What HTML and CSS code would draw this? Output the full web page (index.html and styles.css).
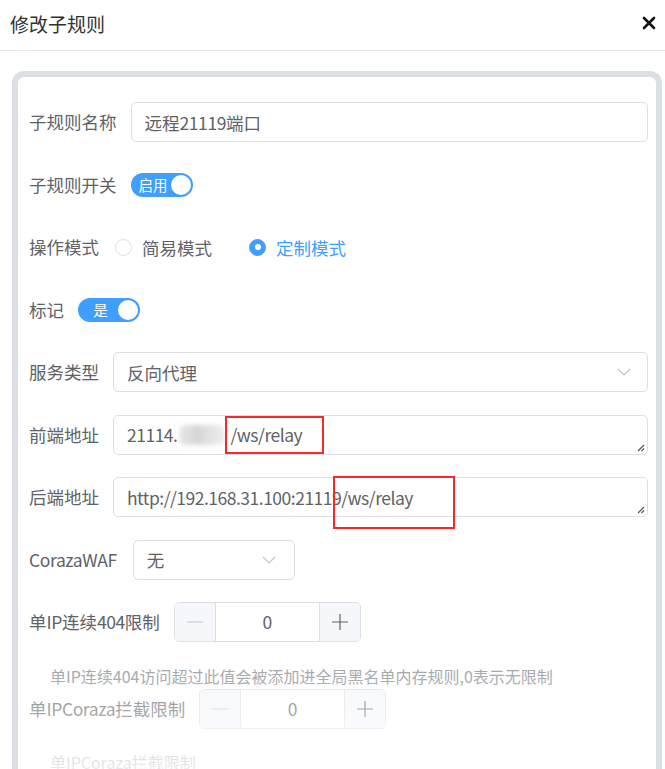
FILE: index.html
```html
<!DOCTYPE html>
<html lang="zh-CN">
<head>
<meta charset="utf-8">
<title>修改子规则</title>
<link rel="stylesheet" href="styles.css">
</head>
<body>
<div class="header">
  <div class="title">修改子规则</div>
  <svg class="close" width="14" height="14" viewBox="0 0 14 14"><path d="M2 2 L12 12 M12 2 L2 12" stroke="#111" stroke-width="2.6" stroke-linecap="round"/></svg>
</div>
<div class="content">
  <div class="card">
    <div class="row">
      <div class="label">子规则名称</div>
      <div class="input grow">远程<span class="lat">21119</span>端口</div>
    </div>
    <div class="row">
      <div class="label">子规则开关</div>
      <div class="switch"><span class="sw-text">启用</span><span class="knob"></span></div>
    </div>
    <div class="row">
      <div class="label">操作模式</div>
      <div class="radio"><span class="dot"></span><span class="rtext">简易模式</span></div>
      <div class="radio checked"><span class="dot"></span><span class="rtext">定制模式</span></div>
    </div>
    <div class="row">
      <div class="label">标记</div>
      <div class="switch"><span class="sw-text">是</span><span class="knob"></span></div>
    </div>
    <div class="row">
      <div class="label">服务类型</div>
      <div class="input select grow"><span>反向代理</span>
        <svg class="chev" width="14" height="8" viewBox="0 0 14 8"><path d="M1 1 L7 7 L13 1" fill="none" stroke="#c0c4cc" stroke-width="1.2"/></svg>
      </div>
    </div>
    <div class="row">
      <div class="label">前端地址</div>
      <div class="input textarea grow"><span class="lat">21114.</span><span class="blur"></span><span class="lat">/ws/relay</span>
        <svg class="grip" width="8" height="8" viewBox="0 0 8 8"><path d="M7 1 L1 7 M7 4.5 L4.5 7" stroke="#555" stroke-width="1.2"/></svg>
      </div>
    </div>
    <div class="row">
      <div class="label">后端地址</div>
      <div class="input textarea grow"><span class="lat">http://192.168.31.100:21119/ws/relay</span>
        <svg class="grip" width="8" height="8" viewBox="0 0 8 8"><path d="M7 1 L1 7 M7 4.5 L4.5 7" stroke="#555" stroke-width="1.2"/></svg>
      </div>
    </div>
    <div class="row">
      <div class="label"><span class="lat">CorazaWAF</span></div>
      <div class="input select waf"><span>无</span>
        <svg class="chev" width="14" height="8" viewBox="0 0 14 8"><path d="M1 1 L7 7 L13 1" fill="none" stroke="#c0c4cc" stroke-width="1.2"/></svg>
      </div>
    </div>
    <div class="row">
      <div class="label">单<span class="lat">IP</span>连续<span class="lat">404</span>限制</div>
      <div class="number">
        <span class="nbtn minus"><svg width="16" height="2" viewBox="0 0 16 2"><path d="M0 1 H16" stroke="#c0c4cc" stroke-width="1.2"/></svg></span>
        <span class="nval">0</span>
        <span class="nbtn plus"><svg width="16" height="16" viewBox="0 0 16 16"><path d="M0 8 H16 M8 0 V16" stroke="#606266" stroke-width="1.2"/></svg></span>
      </div>
    </div>
    <div class="help help1">单IP连续404访问超过此值会被添加进全局黑名单内存规则,0表示无限制</div>
    <div class="row row10">
      <div class="label">单<span class="lat">IPCoraza</span>拦截限制</div>
      <div class="number">
        <span class="nbtn minus"><svg width="16" height="2" viewBox="0 0 16 2"><path d="M0 1 H16" stroke="#c0c4cc" stroke-width="1.2"/></svg></span>
        <span class="nval">0</span>
        <span class="nbtn plus"><svg width="16" height="16" viewBox="0 0 16 16"><path d="M0 8 H16 M8 0 V16" stroke="#606266" stroke-width="1.2"/></svg></span>
      </div>
    </div>
    <div class="help help2">单IPCoraza拦截限制</div>
  </div>
</div>
<div class="fade"></div>
<div class="mark mark1"></div>
<div class="mark mark2"></div>
</body>
</html>
```
FILE: styles.css
```css
html, body {
  margin: 0;
  padding: 0;
  overflow: hidden;
  background: #fff;
  height: 769px;
}
body {
  font-family: "Noto Sans CJK SC", "Noto Sans", sans-serif;
  color: #606266;
}
.header {
  border-bottom: 1px solid #e4e7ed;
  display: flex;
  align-items: center;
  justify-content: space-between;
  padding: 0 9px 0 10px;
  box-sizing: border-box;
  height: 51px;
}
.title {
  font-size: 19px;
  color: #303133;
  margin-top: -4px;
}
.close {
  margin-top: -4px;
}
.content {
  padding: 20px 0 0 12px;
}
.card {
  width: 650px;
  box-sizing: border-box;
  border: 6px solid #dcdfe6;
  border-bottom: none;
  border-radius: 12px 12px 0 0;
  padding: 25px 8px 40px 11px;
}
.row {
  display: flex;
  align-items: center;
  height: 40px;
  margin-bottom: 22.5px;
}
.lat {
  letter-spacing: -0.4px;
}
.label {
  font-size: 17.5px;
  color: #606266;
  margin-right: 14px;
  white-space: nowrap;
  line-height: 40px;
}
.input {
  height: 40px;
  box-sizing: border-box;
  border: 1px solid #dcdfe6;
  border-radius: 5px;
  padding: 0 14px 0 13px;
  font-size: 17.5px;
  color: #606266;
  display: flex;
  align-items: center;
  position: relative;
  white-space: nowrap;
}
.grow {
  flex: 1;
}
.select {
  justify-content: space-between;
}
.chev {
  margin-right: 2px;
}
.waf {
  width: 162px;
  margin-left: 2px;
  padding-right: 16px;
}
.textarea {
  padding-left: 13px;
}
.textarea .lat {
  letter-spacing: -0.5px;
}
.grip {
  position: absolute;
  right: 2px;
  bottom: 2px;
}
.blur {
  display: inline-block;
  width: 46px;
  height: 20px;
  background: linear-gradient(90deg, #e8e8e8, #d6d6d6 40%, #e4e4e4 70%, #efefef);
  filter: blur(2px);
  border-radius: 6px;
  margin: 0 5px 0 2px;
}
.switch {
  width: 62px;
  height: 24px;
  border-radius: 12px;
  background: #409eff;
  display: flex;
  align-items: center;
  box-sizing: border-box;
  padding: 0 2px 0 5px;
}
.sw-text {
  flex: 1;
  text-align: center;
  color: #fff;
  font-size: 14.5px;
  line-height: 24px;
}
.knob {
  width: 20px;
  height: 20px;
  border-radius: 50%;
  background: #fff;
}
.radio {
  display: flex;
  align-items: center;
  margin-right: 37px;
  margin-left: 2px;
}
.radio + .radio {
  margin-left: 0;
}
.dot {
  width: 17px;
  height: 17px;
  box-sizing: border-box;
  border: 1px solid #dcdfe6;
  border-radius: 50%;
  background: #fff;
  margin-right: 10px;
  position: relative;
}
.rtext {
  font-size: 17.5px;
  color: #606266;
}
.checked .dot {
  background: #409eff;
  border-color: #409eff;
}
.checked .dot::after {
  content: "";
  position: absolute;
  left: 50%;
  top: 50%;
  width: 6px;
  height: 6px;
  margin: -3px 0 0 -3px;
  border-radius: 50%;
  background: #fff;
}
.checked .rtext {
  color: #409eff;
}
.number {
  width: 187px;
  height: 40px;
  box-sizing: border-box;
  border: 1px solid #dcdfe6;
  border-radius: 5px;
  display: flex;
  overflow: hidden;
}
.nbtn {
  width: 40px;
  background: #f5f7fa;
  display: flex;
  align-items: center;
  justify-content: center;
}
.minus {
  border-right: 1px solid #dcdfe6;
}
.plus {
  border-left: 1px solid #dcdfe6;
}
.nval {
  flex: 1;
  text-align: center;
  line-height: 38px;
  font-size: 17.5px;
  color: #606266;
}
.help {
  font-size: 16px;
  color: #909399;
  line-height: 22px;
  padding-left: 21px;
  white-space: nowrap;
}
.help1 {
  margin-top: 4px;
}
.row10 {
  margin-top: 2px;
  margin-bottom: 22px;
}
.fade {
  position: fixed;
  left: 18px;
  right: 9px;
  top: 640px;
  bottom: 0;
  background: linear-gradient(180deg, rgba(255,255,255,0) 0%, rgba(255,255,255,0.8) 100%);
  pointer-events: none;
}
.mark {
  position: absolute;
  border: 2px solid #f42a2a;
  box-sizing: border-box;
}
.mark1 {
  left: 225px;
  top: 416px;
  width: 99px;
  height: 38px;
}
.mark2 {
  left: 333px;
  top: 476px;
  width: 122px;
  height: 53px;
}
```
